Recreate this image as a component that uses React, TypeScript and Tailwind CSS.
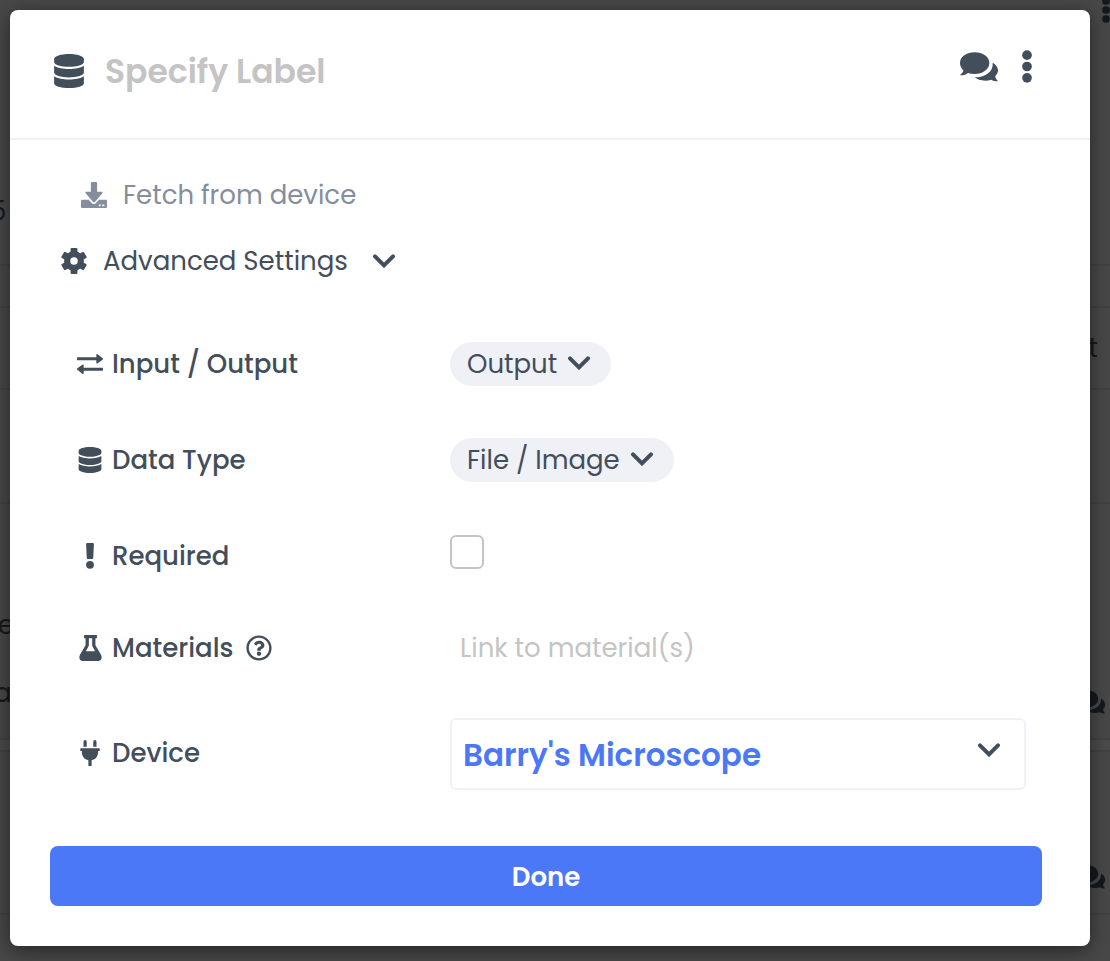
import React, { useState } from 'react';
import { FaDatabase, FaRegQuestionCircle } from 'react-icons/fa';

interface IconProps {
  className?: string;
}

const ChevronIcon: React.FC<IconProps> = ({ className = '' }) => (
  <svg viewBox="0 0 68 42" className={`h-3.5 w-6 shrink-0 ${className}`} fill="none" aria-hidden="true">
    <path d="M7 7 34 34 61 7" stroke="currentColor" strokeWidth="12" strokeLinecap="round" />
  </svg>
);

const CommentsIcon: React.FC<IconProps> = ({ className = '' }) => (
  <svg viewBox="0 0 114 90" className={`shrink-0 ${className}`} fill="currentColor" aria-hidden="true">
    <path d="M44 1C20 1 0 14 0 33c0 9 4 16 10 22 0 6-5 10-9 13 0 1 0 2 2 2 8 0 16-3 21-7 6 2 13 3 20 3 24 0 44-14 44-33S68 1 44 1Z" />
    <path d="M98 32c10 6 16 14 16 23 0 7-3 12-8 17 0 6 3 10 7 14 1 1 0 2-1 2-7 0-13-2-18-5-6 2-12 3-18 3-14 0-25-4-32-10 30 0 57-16 54-44Z" />
  </svg>
);

const EllipsisIcon: React.FC<IconProps> = ({ className = '' }) => (
  <svg viewBox="0 0 30 98" className={`shrink-0 ${className}`} fill="currentColor" aria-hidden="true">
    <circle cx="15" cy="15" r="14.5" />
    <circle cx="15" cy="49" r="14.5" />
    <circle cx="15" cy="83" r="14.5" />
  </svg>
);

const DownloadIcon: React.FC<IconProps> = ({ className = '' }) => (
  <svg viewBox="0 0 79 79" className={`shrink-0 ${className}`} fill="currentColor" aria-hidden="true">
    <path d="M33 0h13q3 0 3 3v27h14q4 0 2 4L42 61q-2 2-5 0L14 34q-2-4 2-4h14V3q0-3 3-3Z" />
    <path
      fillRule="evenodd"
      d="M4 54h19l11 11q5 4 10 0l11-11h20q4 0 4 4v17q0 4-4 4H4q-4 0-4-4V58q0-4 4-4Zm50 14v6h6v-6Zm11 0v6h6v-6Z"
    />
  </svg>
);

const GearIcon: React.FC<IconProps> = ({ className = '' }) => (
  <svg viewBox="-38 -38 76 76" className={`shrink-0 ${className}`} fill="currentColor" aria-hidden="true">
    <circle r="20" fill="none" stroke="currentColor" strokeWidth="18" />
    {[0, 60, 120, 180, 240, 300].map(angle => (
      <rect key={angle} x="-10" y="-38" width="20" height="18" rx="3" transform={`rotate(${angle})`} />
    ))}
  </svg>
);

const ExchangeIcon: React.FC<IconProps> = ({ className = '' }) => (
  <svg viewBox="0 0 78 60" className={`shrink-0 ${className}`} fill="currentColor" aria-hidden="true">
    <path d="M2 10h56V3q0-4 4-2l15 12q2 2 0 4L62 28q-4 2-4-2v-7H2q-2 0-2-2v-5q0-2 2-2Z" />
    <path d="M76 50H20v7q0 4-4 2L1 47q-2-2 0-4l15-11q4-2 4 2v7h56q2 0 2 2v5q0 2-2 2Z" />
  </svg>
);

const ExclamationIcon: React.FC<IconProps> = ({ className = '' }) => (
  <svg viewBox="0 0 26 80" className={`shrink-0 ${className}`} fill="currentColor" aria-hidden="true">
    <path d="M4 0h18q3 0 3 3l-2 43q0 3-3 3H6q-3 0-3-3L1 3q0-3 3-3Z" />
    <circle cx="13" cy="67" r="12" />
  </svg>
);

const FlaskIcon: React.FC<IconProps> = ({ className = '' }) => (
  <svg viewBox="0 0 68 79" className={`shrink-0 ${className}`} fill="currentColor" aria-hidden="true">
    <path
      fillRule="evenodd"
      d="M17 0h34q3 0 3 3v4q0 3-3 3h-2v21l17 29q6 15-7 19H9q-13-4-7-19l17-29V10h-2q-3 0-3-3V3q0-3 3-3Zm12 10v23l-9 16h28l-9-16V10Z"
    />
  </svg>
);

const PlugIcon: React.FC<IconProps> = ({ className = '' }) => (
  <svg viewBox="0 0 60 80" className={`shrink-0 ${className}`} fill="currentColor" aria-hidden="true">
    <path d="M10 5q0-5 5-5t5 5v16H10ZM40 5q0-5 5-5t5 5v16H40ZM2 25h56q2 0 2 2v5q0 2-2 2h-3v5q-1 18-20 23v18H25V62Q6 57 5 39v-5H2q-2 0-2-2v-5q0-2 2-2Z" />
  </svg>
);

interface SettingRowProps {
  htmlFor: string;
  label: string;
  icon: React.ReactNode;
  help?: React.ReactNode;
  className?: string;
  children: React.ReactNode;
}

const SettingRow: React.FC<SettingRowProps> = ({ htmlFor, label, icon, help, className = 'min-h-24', children }) => (
  <div className={`grid grid-cols-[374px_1fr] items-center ${className}`}>
    <div className="flex items-center gap-3">
      <label htmlFor={htmlFor} className="flex items-center gap-2 font-medium">
        <span className="flex w-7 justify-center">{icon}</span>
        {label}
      </label>
      {help}
    </div>
    {children}
  </div>
);

interface PillSelectProps {
  id: string;
  value: string;
  options: string[];
  onChange: (value: string) => void;
}

const PillSelect: React.FC<PillSelectProps> = ({ id, value, options, onChange }) => (
  <div className="relative w-fit">
    <select
      id={id}
      value={value}
      onChange={e => onChange(e.target.value)}
      className="block h-11 appearance-none rounded-full bg-[#f0f1f6] pr-[54px] pl-[17px] field-sizing-content"
    >
      {options.map(option => (
        <option key={option}>{option}</option>
      ))}
    </select>
    <ChevronIcon className="pointer-events-none absolute top-3.5 right-5" />
  </div>
);

// Protocol page that stays visible around the dialog
const PageBehind: React.FC = () => (
  <div className="absolute inset-0 flex flex-col overflow-hidden text-[#15191e]" aria-hidden="true">
    <div className="flex h-[266px] justify-between border-b-2 border-[#424242]">
      <span className="-ml-2.5 self-end pb-8">5</span>
      <EllipsisIcon className="-mt-[3px] h-[26px] w-2" />
    </div>
    <div className="h-[42px] border-b-2 border-[#424242]" />
    <div className="flex h-[82px] items-center justify-end border-b-2 border-[#424242] pr-3">t</div>
    <div className="h-[114px] border-b-2 border-[#424242]" />
    <div className="flex h-[236px] items-end justify-between border-b-2 border-[#424242] pb-6">
      <div className="-ml-3 flex flex-col gap-[26px]">
        <span>re</span>
        <span className="pl-1.5">a</span>
      </div>
      <CommentsIcon className="mr-1 h-6 w-8" />
    </div>
    <div className="h-3 border-b-2 border-[#424242] bg-[#4b4b4b]" />
    <div className="flex h-[163px] items-end justify-end border-b-2 border-[#424242] pr-1 pb-6">
      <CommentsIcon className="h-6 w-8" />
    </div>
  </div>
);

const App: React.FC = () => {
  const [label, setLabel] = useState('');
  const [direction, setDirection] = useState('Output');
  const [dataType, setDataType] = useState('File / Image');
  const [required, setRequired] = useState(false);
  const [material, setMaterial] = useState('');
  const [device, setDevice] = useState("Barry's Microscope");
  const [showAdvanced, setShowAdvanced] = useState(true);

  return (
    <div className="relative min-h-screen bg-[#484848] pt-2.5 pr-5 pb-[15px] pl-2.5 font-['Poppins','Inter',sans-serif] text-[26px] leading-[42px] text-[#434e5b]">
      <PageBehind />

      <div
        role="dialog"
        aria-label="Field settings"
        className="relative rounded-lg bg-white shadow-[0_4px_20px_rgba(0,0,0,0.5)]"
      >
        {/* Header */}
        <header className="flex h-[130px] items-start border-b-2 border-[#f0f1f6] pt-10 pr-[58px] pl-11">
          <FaDatabase className="mt-1 h-[34px] w-[30px] shrink-0" />
          <input
            type="text"
            aria-label="Label"
            placeholder="Specify Label"
            value={label}
            onChange={e => setLabel(e.target.value)}
            className="ml-[21px] min-w-0 flex-1 text-[33px] leading-[44px] font-semibold placeholder-[#c4c4c4] outline-none"
          />
          <div className="flex items-center gap-6">
            <button type="button" aria-label="Comments">
              <CommentsIcon className="h-[30px] w-[38px]" />
            </button>
            <button type="button" aria-label="More options">
              <EllipsisIcon className="h-[33px] w-2.5" />
            </button>
          </div>
        </header>

        {/* Body */}
        <div className="pt-[34px] pr-12 pb-10 pl-10">
          <button type="button" className="ml-[31px] flex items-center gap-4 text-[#848e9d]">
            <DownloadIcon className="h-[26px] w-[26px]" />
            Fetch from device
          </button>

          <button
            type="button"
            aria-expanded={showAdvanced}
            onClick={() => setShowAdvanced(!showAdvanced)}
            className="mt-6 ml-[11px] flex items-center"
          >
            <GearIcon className="h-[26px] w-[26px]" />
            <span className="mr-6 ml-4">Advanced Settings</span>
            <ChevronIcon />
          </button>

          {showAdvanced && (
            <div className="mt-[34px] pr-4 pl-[26px]">
              <SettingRow htmlFor="direction" label="Input / Output" icon={<ExchangeIcon className="h-5 w-[26px]" />}>
                <PillSelect
                  id="direction"
                  value={direction}
                  options={['Input', 'Output']}
                  onChange={setDirection}
                />
              </SettingRow>

              <SettingRow htmlFor="data-type" label="Data Type" icon={<FaDatabase className="h-[26px] w-[26px]" />}>
                <PillSelect
                  id="data-type"
                  value={dataType}
                  options={['Text', 'Number', 'File / Image']}
                  onChange={setDataType}
                />
              </SettingRow>

              <SettingRow htmlFor="required" label="Required" icon={<ExclamationIcon className="h-[26px] w-2.5" />}>
                <input
                  id="required"
                  type="checkbox"
                  checked={required}
                  onChange={e => setRequired(e.target.checked)}
                  className="mb-2 size-[34px] appearance-none rounded-md border-2 border-[#c4c4c4] checked:bg-[#4b78f6]"
                />
              </SettingRow>

              <SettingRow
                htmlFor="materials"
                label="Materials"
                icon={<FlaskIcon className="h-[26px] w-[23px]" />}
                help={
                  <button type="button" aria-label="About materials">
                    <FaRegQuestionCircle className="h-[26px] w-[26px]" />
                  </button>
                }
                className="min-h-[88px]"
              >
                <input
                  id="materials"
                  type="text"
                  placeholder="Link to material(s)"
                  value={material}
                  onChange={e => setMaterial(e.target.value)}
                  className="w-full pl-2.5 placeholder-[#c4c4c4] outline-none"
                />
              </SettingRow>

              <SettingRow
                htmlFor="device"
                label="Device"
                icon={<PlugIcon className="h-[26px] w-5" />}
                className="min-h-[122px]"
              >
                <div className="relative mt-0.5">
                  <select
                    id="device"
                    value={device}
                    onChange={e => setDevice(e.target.value)}
                    className="block h-[72px] w-full appearance-none rounded-md border-2 border-[#f0f1f6] pt-0.5 pr-16 pl-[11px] text-[31px] font-semibold text-[#4b78f6]"
                  >
                    <option>Barry's Microscope</option>
                  </select>
                  <ChevronIcon className="pointer-events-none absolute top-[25px] right-[25px]" />
                </div>
              </SettingRow>
            </div>
          )}

          <button
            type="button"
            className="mt-8 h-[60px] w-full rounded-lg bg-[#4b78f6] pt-0.5 font-semibold text-white"
          >
            Done
          </button>
        </div>
      </div>
    </div>
  );
};

export default App;
